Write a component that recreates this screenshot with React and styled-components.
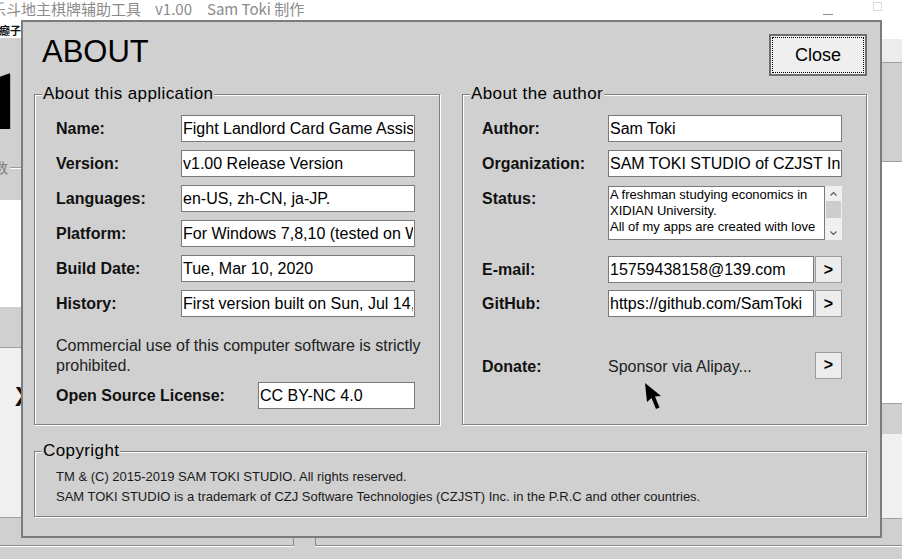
import React from "react";
import styled, { createGlobalStyle } from "styled-components";

const GlobalStyle = createGlobalStyle`
  html, body { margin: 0; padding: 0; }
  body {
    width: 902px;
    height: 559px;
    overflow: hidden;
    background: #fff;
    font-family: "Liberation Sans", Arial, sans-serif;
  }
`;

const GRAY = "#d0d0d0";
const LIGHT = "#f0f0f0";
const LINE = "#a0a0a0";

export default function App() {
  return (
    <>
      <GlobalStyle />
      <Screen>
        <TitleBar>
          <TitleText $ml={-9}>乐斗地主棋牌辅助工具</TitleText>
          <TitleText $ml={14}>v1.00</TitleText>
          <TitleText $ml={15}>Sam Toki 制作</TitleText>
          <Minimize />
          <Maximize />
        </TitleBar>

        <Body>
          <Column>
            <Band $h={16} $bg="#fff">
              <Tag>癫子</Tag>
            </Band>
            <Band $h={162} $bg={GRAY}>
              <BigDigit>1</BigDigit>
              <GroupStub>
                <span>数</span>
                <StubLine />
              </GroupStub>
            </Band>
            <Band $h={107} $bg="#fff" />
            <Band $h={41} $bg={GRAY} $line />
            <Band $h={170} $bg={LIGHT} $line>
              <CutLetter>X</CutLetter>
            </Band>
            <Band $bg={GRAY} />
          </Column>
          <Column />
          <Column>
            <Band $h={17} $bg="#fff" />
            <Band $h={24} $bg="#ececec" $line />
            <Band $h={99} $bg={GRAY} $line />
            <Band $h={242} $bg="#fff" $line />
            <Band $h={30} $bg={GRAY} />
            <Band $h={85} $bg={LIGHT} $line />
            <Band $bg={GRAY} />
          </Column>
        </Body>

        <BottomStrip>
          <BottomBox $w={294} $side="right" />
          <BottomBox $side="left" />
        </BottomStrip>

        <Dialog>
          <Header>
            <Heading>ABOUT</Heading>
            <CloseButton>Close</CloseButton>
          </Header>

          <Groups>
            <Group>
              <Legend>About this application</Legend>
              <GroupBody $pad="11px 24px 15px 21px">
                <Row $label={125} $mt={0}>
                  <Label>Name:</Label>
                  <Field readOnly defaultValue="Fight Landlord Card Game Assistant" />
                </Row>
                <Row $label={125}>
                  <Label>Version:</Label>
                  <Field readOnly defaultValue="v1.00 Release Version" />
                </Row>
                <Row $label={125}>
                  <Label>Languages:</Label>
                  <Field readOnly defaultValue="en-US, zh-CN, ja-JP." />
                </Row>
                <Row $label={125}>
                  <Label>Platform:</Label>
                  <Field readOnly defaultValue="For Windows 7,8,10 (tested on Windows 10)" />
                </Row>
                <Row $label={125}>
                  <Label>Build Date:</Label>
                  <Field readOnly defaultValue="Tue, Mar 10, 2020" />
                </Row>
                <Row $label={125}>
                  <Label>History:</Label>
                  <Field readOnly defaultValue="First version built on Sun, Jul 14, 2019" />
                </Row>
                <Notice>
                  Commercial use of this computer software is strictly
                  <br />
                  prohibited.
                </Notice>
                <Row $label={202} $mt={6}>
                  <Label>Open Source License:</Label>
                  <Field readOnly defaultValue="CC BY-NC 4.0" />
                </Row>
              </GroupBody>
            </Group>

            <Group>
              <Legend>About the author</Legend>
              <GroupBody $pad="11px 24px 0 19px">
                <Row $label={126} $mt={0}>
                  <Label>Author:</Label>
                  <Field readOnly defaultValue="Sam Toki" />
                </Row>
                <Row $label={126}>
                  <Label>Organization:</Label>
                  <Field readOnly defaultValue="SAM TOKI STUDIO of CZJST Inc." />
                </Row>
                <Row $label={126} $top>
                  <Label>Status:</Label>
                  <StatusBox>
                    <StatusText>
                      A freshman studying economics in
                      <br />
                      XIDIAN University.
                      <br />
                      All of my apps are created with love
                    </StatusText>
                    <Scrollbar>
                      <ArrowCell>
                        <Chevron viewBox="0 0 7 4">
                          <polyline points="0.5,3.5 3.5,0.5 6.5,3.5" />
                        </Chevron>
                      </ArrowCell>
                      <Thumb />
                      <Track />
                      <ArrowCell>
                        <Chevron viewBox="0 0 7 4">
                          <polyline points="0.5,0.5 3.5,3.5 6.5,0.5" />
                        </Chevron>
                      </ArrowCell>
                    </Scrollbar>
                  </StatusBox>
                </Row>
                <Row $label={126} $mt={16}>
                  <Label>E-mail:</Label>
                  <InputGroup>
                    <Field readOnly defaultValue="15759438158@139.com" />
                    <GoButton>&gt;</GoButton>
                  </InputGroup>
                </Row>
                <Row $label={126} $mt={7}>
                  <Label>GitHub:</Label>
                  <InputGroup>
                    <Field readOnly defaultValue="https://github.com/SamToki" />
                    <GoButton>&gt;</GoButton>
                  </InputGroup>
                </Row>
                <Row $label={126} $mt={33}>
                  <Label $drop={3}>Donate:</Label>
                  <InputGroup>
                    <Plain>Sponsor via Alipay...</Plain>
                    <GoButton>&gt;</GoButton>
                  </InputGroup>
                </Row>
              </GroupBody>
            </Group>
          </Groups>

          <CopyrightGroup>
            <Legend>Copyright</Legend>
            <GroupBody $pad="6px 12px 9px 21px">
              <Small>TM &amp; (C) 2015-2019 SAM TOKI STUDIO. All rights reserved.</Small>
              <Small>
                SAM TOKI STUDIO is a trademark of CZJ Software Technologies (CZJST) Inc. in the
                P.R.C and other countries.
              </Small>
            </GroupBody>
          </CopyrightGroup>
        </Dialog>

        <Cursor viewBox="0 0 17 27">
          <polygon points="0,0 2,19 6.5,15 11,26 14.5,24.5 10,13.5 16,13" />
        </Cursor>
      </Screen>
    </>
  );
}

const Screen = styled.div`
  position: relative;
  width: 902px;
  height: 559px;
  overflow: hidden;
  display: grid;
  grid-template-rows: 22px 1fr 21px;
`;

const TitleBar = styled.div`
  display: flex;
  align-items: flex-start;
  background: #fff;
  color: #8c8c8c;
  font: 15px/17px "Noto Sans CJK SC", "Liberation Sans", sans-serif;
  white-space: nowrap;
  overflow: hidden;
`;

const TitleText = styled.span`
  margin-left: ${(p) => p.$ml}px;
`;

const Minimize = styled.div`
  margin-left: auto;
  margin-top: 14px;
  width: 10px;
  height: 1px;
  background: #8c8c8c;
`;

const Maximize = styled.div`
  margin: 2px 20px 0 40px;
  width: 9px;
  height: 9px;
  box-sizing: border-box;
  border: 1px solid #dcdcdc;
`;

const Body = styled.div`
  display: grid;
  grid-template-columns: 21px 1fr 20px;
  min-height: 0;
`;

const Column = styled.div`
  display: flex;
  flex-direction: column;
  min-height: 0;
`;

const Band = styled.div`
  flex: ${(p) => (p.$h ? "none" : 1)};
  height: ${(p) => (p.$h ? `${p.$h}px` : "auto")};
  box-sizing: border-box;
  background: ${(p) => p.$bg};
  border-bottom: ${(p) => (p.$line ? `1px solid ${LINE}` : "none")};
  overflow: hidden;
  display: flex;
  flex-direction: column;
  align-items: flex-start;
`;

const Tag = styled.span`
  margin: 1px 0 0 -1px;
  font: bold 11px/14px "Noto Sans CJK SC", sans-serif;
  color: #111;
  white-space: nowrap;
`;

const BigDigit = styled.span`
  margin: 27px 0 0 -20px;
  font-family: Roboto, "Open Sans", sans-serif;
  font-weight: 700;
  font-size: 77px;
  line-height: 77px;
  color: #000;
`;

const GroupStub = styled.div`
  align-self: stretch;
  display: flex;
  align-items: center;
  margin-top: 17px;
  height: 16px;
  color: #7a7a7a;
  font: 14px/16px "Noto Sans CJK SC", sans-serif;
  white-space: nowrap;

  span {
    margin-left: -6px;
  }
`;

const StubLine = styled.div`
  flex: 1;
  height: 1px;
  margin-left: 2px;
  background: #9a9a9a;
  box-shadow: 0 1px 0 #fff;
`;

const CutLetter = styled.span`
  margin: 34px 0 0 15px;
  font: bold 27px/30px "Liberation Sans", Arial, sans-serif;
  color: #111;
`;

const BottomStrip = styled.div`
  display: flex;
  gap: 21px;
  background: ${GRAY};
`;

const BottomBox = styled.div`
  flex: ${(p) => (p.$w ? "none" : 1)};
  width: ${(p) => (p.$w ? `${p.$w}px` : "auto")};
  height: 8px;
  box-sizing: border-box;
  border-bottom: 1px solid #8a8a8a;
  border-${(p) => p.$side}: 1px solid #8a8a8a;
  box-shadow: 0 1px 0 #fff;
`;

const Dialog = styled.section`
  position: absolute;
  left: 21px;
  top: 20px;
  width: 861px;
  height: 518px;
  box-sizing: border-box;
  border: 2px solid #7c7c7c;
  background: ${GRAY};
  padding: 12px 13px 0 11px;
  color: #000;
`;

const Header = styled.div`
  display: flex;
  justify-content: space-between;
  align-items: flex-start;
`;

const Heading = styled.h1`
  margin: 0 0 0 8px;
  font: normal 31px/36px "Liberation Sans", Arial, sans-serif;
`;

const CloseButton = styled.button`
  width: 98px;
  height: 42px;
  box-sizing: border-box;
  padding: 0;
  border: 2px solid #6e6e6e;
  background: #efefef;
  color: #000;
  font: 18px "Liberation Sans", Arial, sans-serif;
  outline: 1px dotted #000;
  outline-offset: -4px;
`;

const Groups = styled.div`
  display: grid;
  grid-template-columns: 406px 405px;
  column-gap: 22px;
  margin-top: 8px;
`;

const Group = styled.fieldset`
  margin: 0;
  padding: 0;
  min-width: 0;
  border: 1px solid #808080;
  box-shadow: 1px 1px 0 #fff, inset 1px 1px 0 #fff;
`;

const CopyrightGroup = styled(Group)`
  margin-top: 16px;
`;

const Legend = styled.legend`
  margin-left: 7px;
  padding: 0 1px;
  background: ${GRAY};
  font: 17px/20px "Liberation Sans", Arial, sans-serif;
  letter-spacing: 0.4px;
  color: #000;
`;

const GroupBody = styled.div`
  display: flex;
  flex-direction: column;
  padding: ${(p) => p.$pad};
`;

const Row = styled.div`
  display: grid;
  grid-template-columns: ${(p) => p.$label}px minmax(0, 1fr);
  align-items: ${(p) => (p.$top ? "start" : "center")};
  margin-top: ${(p) => p.$mt ?? 8}px;
`;

const Label = styled.span`
  padding-top: ${(p) => p.$drop ?? 0}px;
  font: bold 16px/27px "Liberation Sans", Arial, sans-serif;
  color: #111;
  white-space: nowrap;
`;

const Field = styled.input`
  flex: 1;
  width: 100%;
  min-width: 0;
  height: 27px;
  box-sizing: border-box;
  margin: 0;
  padding: 0 1px;
  border: 1px solid #7a7a7a;
  border-radius: 0;
  background: #fff;
  color: #000;
  font: 16px "Liberation Sans", Arial, sans-serif;
  outline: none;
`;

const Notice = styled.p`
  margin: 19px 0 0;
  font: 16px/20px "Liberation Sans", Arial, sans-serif;
  color: #222;
  white-space: nowrap;
`;

const InputGroup = styled.div`
  display: flex;
  align-items: center;
  gap: 1px;
`;

const GoButton = styled.button`
  flex: none;
  width: 27px;
  height: 27px;
  box-sizing: border-box;
  padding: 0;
  border: 1px solid #9c9c9c;
  background: #ececec;
  color: #000;
  font: bold 16px "Liberation Sans", Arial, sans-serif;
`;

const Plain = styled.span`
  flex: 1;
  padding-top: 3px;
  font: 16px/27px "Liberation Sans", Arial, sans-serif;
  color: #222;
`;

const StatusBox = styled.div`
  display: flex;
  height: 54px;
  margin-top: 1px;
`;

const StatusText = styled.div`
  flex: 1;
  box-sizing: border-box;
  border: 1px solid #7a7a7a;
  background: #fff;
  padding: 0 1px;
  font: 13px/16px "Liberation Sans", Arial, sans-serif;
  color: #000;
  white-space: nowrap;
  overflow: hidden;
`;

const Scrollbar = styled.div`
  width: 17px;
  background: ${LIGHT};
  display: flex;
  flex-direction: column;
  align-items: center;
`;

const ArrowCell = styled.div`
  height: 15px;
  display: flex;
  align-items: center;
  justify-content: center;
`;

const Chevron = styled.svg`
  width: 7px;
  height: 4px;
  fill: none;
  stroke: #606060;
  stroke-width: 1.2;
`;

const Thumb = styled.div`
  width: 15px;
  height: 17px;
  background: #cdcdcd;
`;

const Track = styled.div`
  flex: 1;
`;

const Small = styled.div`
  font: 13px/20px "Liberation Sans", Arial, sans-serif;
  color: #1a1a1a;
  white-space: nowrap;
`;

const Cursor = styled.svg`
  position: absolute;
  left: 645px;
  top: 383px;
  width: 17px;
  height: 27px;
  fill: #000;
`;
